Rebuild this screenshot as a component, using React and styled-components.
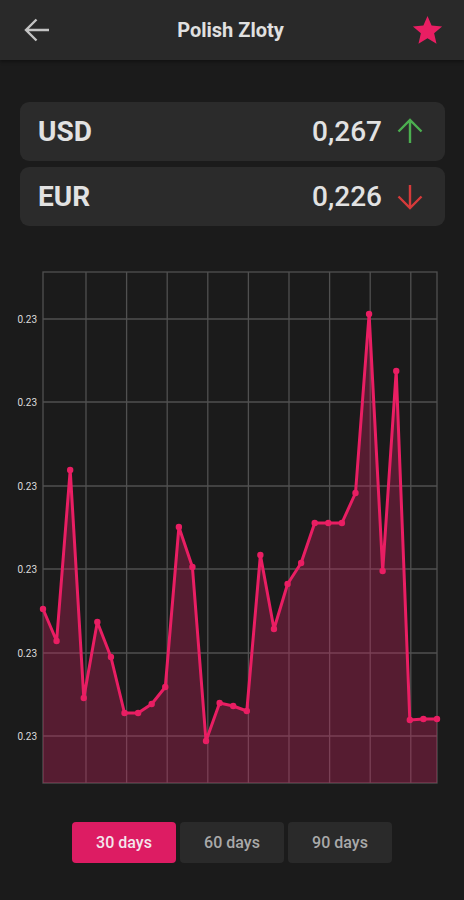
import React, { useState } from "react";
import styled, { createGlobalStyle } from "styled-components";

const PINK = "#e91e63";

const GlobalStyle = createGlobalStyle`
  html, body {
    margin: 0;
    padding: 0;
    background: #1b1b1b;
  }
  body {
    font-family: Roboto, "Noto Sans", sans-serif;
    color: #e0e0e0;
  }
`;

// page-space y values of the 30 daily points (chart drawn in page coords, offset below)
const POINTS = [
  609, 641, 470, 698, 622, 657, 713, 713, 704, 687,
  527, 567, 741, 703, 706, 711, 555, 629, 584, 563,
  523, 523, 523, 493, 314, 571, 371, 720, 719, 719,
];
const OFFSET = 240;
const LEFT = 43;
const RIGHT = 437;
const TOP = 272;
const BOTTOM = 783;
const H_LINES = [319, 402, 486, 569, 653, 736];
const V_LINES = [86, 126.6, 167.2, 207.8, 248.4, 289, 329.6, 370.2, 410.8];
const GRID = "#505050";

const RATES = [
  { code: "USD", value: "0,267", up: true },
  { code: "EUR", value: "0,226", up: false },
];

export default function App() {
  const [range, setRange] = useState(30);
  const step = (RIGHT - LEFT) / (POINTS.length - 1);
  const pts = POINTS.map((y, i) => [LEFT + i * step, y - OFFSET]);
  const line = pts.map(([x, y]) => `${x.toFixed(1)},${y}`).join(" ");
  const area = `${LEFT},${BOTTOM - OFFSET} ${line} ${RIGHT},${BOTTOM - OFFSET}`;

  return (
    <>
      <GlobalStyle />
      <Screen>
        <TopBar>
          <IconButton aria-label="back">
            <svg width="28" height="28" viewBox="0 0 28 28">
              <path d="M26 14H3.5M13.5 3.5L3 14l10.5 10.5" fill="none" stroke="#c4c4c4" strokeWidth="2.4" />
            </svg>
          </IconButton>
          <Title>Polish Zloty</Title>
          <IconButton aria-label="favourite">
            <svg width="35" height="35" viewBox="0 0 24 24">
              <path fill={PINK} d="M12 17.27L18.18 21l-1.64-7.03L22 9.24l-7.19-.61L12 2 9.19 8.63 2 9.24l5.46 4.73L5.82 21z" />
            </svg>
          </IconButton>
        </TopBar>

        <Rates>
          {RATES.map((r) => (
            <RateCard key={r.code}>
              <Code>{r.code}</Code>
              <Value>{r.value}</Value>
              <Trend $up={r.up}>
                <svg width="26" height="26" viewBox="0 0 26 26">
                  {r.up ? (
                    <path d="M13 25V2M1.5 13.5L13 2l11.5 11.5" fill="none" stroke="#4caf50" strokeWidth="2.4" />
                  ) : (
                    <path d="M13 1v23M1.5 12.5L13 24l11.5-11.5" fill="none" stroke="#d63a3a" strokeWidth="2.4" />
                  )}
                </svg>
              </Trend>
            </RateCard>
          ))}
        </Rates>

        <ChartBox>
          <svg width="464" height="560" viewBox="0 0 464 560">
            <rect x={LEFT} y={TOP - OFFSET} width={RIGHT - LEFT} height={BOTTOM - TOP} fill="none" stroke={GRID} strokeWidth="1.3" />
            {V_LINES.map((x) => (
              <line key={x} x1={x} x2={x} y1={TOP - OFFSET} y2={BOTTOM - OFFSET} stroke={GRID} strokeWidth="1.3" />
            ))}
            {H_LINES.map((y) => (
              <g key={y}>
                <line x1={LEFT} x2={RIGHT} y1={y - OFFSET} y2={y - OFFSET} stroke={GRID} strokeWidth="1.3" />
                <text x="37" y={y - OFFSET + 3.5} textAnchor="end" fontSize="10" fill="#dcdcdc" fontFamily="Roboto, sans-serif">
                  0.23
                </text>
              </g>
            ))}
            <polygon points={area} fill="rgba(210, 30, 95, 0.32)" />
            <polyline points={line} fill="none" stroke={PINK} strokeWidth="3" strokeLinejoin="round" />
            {pts.map(([x, y], i) => (
              <circle key={i} cx={x} cy={y} r="3.2" fill={PINK} />
            ))}
          </svg>
        </ChartBox>

        <RangeRow>
          {[30, 60, 90].map((d) => (
            <RangeButton key={d} $active={range === d} onClick={() => setRange(d)}>
              {d} days
            </RangeButton>
          ))}
        </RangeRow>
      </Screen>
    </>
  );
}

const Screen = styled.div`
  width: 464px;
  min-height: 900px;
  background: #1b1b1b;
  display: flex;
  flex-direction: column;
`;

const TopBar = styled.header`
  height: 60px;
  background: #292929;
  display: flex;
  align-items: center;
  justify-content: space-between;
  padding: 0 19px 0 23px;
  box-shadow: 0 2px 3px rgba(0, 0, 0, 0.35);
`;

const IconButton = styled.button`
  background: none;
  border: none;
  padding: 0;
  display: flex;
  align-items: center;
  justify-content: center;
  cursor: pointer;
`;

const Title = styled.h1`
  margin: 0;
  font-size: 20px;
  font-weight: 700;
  color: #e0e0e0;
`;

const Rates = styled.div`
  display: flex;
  flex-direction: column;
  gap: 6px;
  padding: 42px 19px 0 20px;
`;

const RateCard = styled.div`
  height: 59px;
  background: #2b2b2b;
  border-radius: 9px;
  display: flex;
  align-items: center;
  padding: 0 22px 0 18px;
`;

const Code = styled.span`
  flex: 1;
  font-size: 28px;
  font-weight: 700;
  color: #e2e2e2;
`;

const Value = styled.span`
  font-size: 28px;
  font-weight: 500;
  color: #e2e2e2;
  margin-right: 15px;
`;

const Trend = styled.span`
  display: flex;
  align-items: center;
  margin-top: ${(p) => (p.$up ? "-2px" : "0")};
`;

const ChartBox = styled.div`
  margin-top: 14px;
  height: 560px;
  svg {
    display: block;
  }
`;

const RangeRow = styled.div`
  display: flex;
  justify-content: center;
  gap: 4px;
  margin-top: 22px;
`;

const RangeButton = styled.button`
  width: 104px;
  height: 41px;
  border: none;
  border-radius: 4px;
  background: ${(p) => (p.$active ? "#dd1c63" : "#2a2a2a")};
  color: ${(p) => (p.$active ? "#f4e6ec" : "#a9a9a9")};
  font-family: Roboto, sans-serif;
  font-size: 16px;
  font-weight: 500;
  cursor: pointer;
`;
